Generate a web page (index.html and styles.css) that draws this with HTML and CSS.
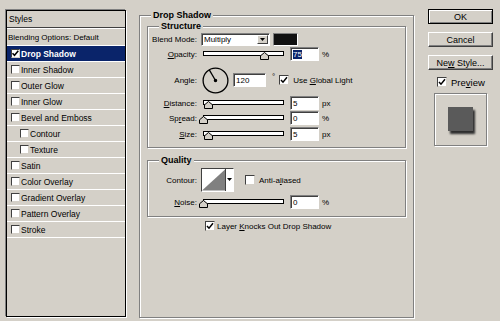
FILE: index.html
```html
<!DOCTYPE html>
<html lang="en">
<head>
  <meta charset="UTF-8" />
  <title>Layer Style</title>
  <link rel="stylesheet" href="styles.css">
</head>
<body>
  <div class="dialog">
    <!-- Styles list -->
    <div class="styles-list">
      <div class="list-head">Styles</div>
      <div class="list-row blend">Blending Options: Default</div>
      <div class="list-row selected"><span class="check on"><svg viewBox="0 0 9 9"><path d="M1.5 4.2 L3.5 6.3 L7.3 1.8" /></svg></span>Drop Shadow</div>
      <div class="list-row"><span class="check"></span>Inner Shadow</div>
      <div class="list-row"><span class="check"></span>Outer Glow</div>
      <div class="list-row"><span class="check"></span>Inner Glow</div>
      <div class="list-row"><span class="check"></span>Bevel and Emboss</div>
      <div class="list-row sub"><span class="check"></span>Contour</div>
      <div class="list-row sub"><span class="check"></span>Texture</div>
      <div class="list-row"><span class="check"></span>Satin</div>
      <div class="list-row"><span class="check"></span>Color Overlay</div>
      <div class="list-row"><span class="check"></span>Gradient Overlay</div>
      <div class="list-row"><span class="check"></span>Pattern Overlay</div>
      <div class="list-row"><span class="check"></span>Stroke</div>
    </div>

    <!-- Drop Shadow settings -->
    <div class="group outer">
      <div class="group-title">Drop Shadow</div>

      <div class="group structure">
        <div class="group-title">Structure</div>

        <div class="row r-blend">
          <span class="lbl">Blend Mode:</span>
          <div class="select">
            <span class="select-text">Multiply</span>
            <span class="select-btn"><svg viewBox="0 0 7 4"><path d="M0 0 H7 L3.5 4 Z" /></svg></span>
          </div>
          <div class="swatch"></div>
        </div>

        <div class="row r-opacity">
          <span class="lbl"><u>O</u>pacity:</span>
          <div class="slider"><div class="track"></div><svg class="thumb" style="left:57px" viewBox="0 0 9 8"><path d="M0.5 7.5 V3.8 L4.5 0.5 L8.5 3.8 V7.5 Z" /></svg></div>
          <div class="field"><span class="sel-text">75</span></div>
          <span class="unit">%</span>
        </div>

        <div class="row r-angle">
          <span class="lbl">Angle:</span>
          <svg class="dial" viewBox="0 0 27 27">
            <circle cx="13.5" cy="13.5" r="12.4" />
            <line x1="13.5" y1="13.5" x2="7.3" y2="2.8" />
            <circle class="dot" cx="13.5" cy="13.5" r="1.1" />
          </svg>
          <div class="field wide">120</div>
          <span class="deg">°</span>
          <span class="box on"><svg viewBox="0 0 10 10"><path d="M2 5 L4 7.2 L8 2.3" /></svg></span>
          <span class="box-lbl">Use <u>G</u>lobal Light</span>
        </div>

        <div class="row r-distance">
          <span class="lbl"><u>D</u>istance:</span>
          <div class="slider"><div class="track"></div><svg class="thumb" style="left:1px" viewBox="0 0 9 8"><path d="M0.5 7.5 V3.8 L4.5 0.5 L8.5 3.8 V7.5 Z" /></svg></div>
          <div class="field">5</div>
          <span class="unit">px</span>
        </div>

        <div class="row r-spread">
          <span class="lbl">Sp<u>r</u>ead:</span>
          <div class="slider"><div class="track"></div><svg class="thumb" style="left:-4px" viewBox="0 0 9 8"><path d="M0.5 7.5 V3.8 L4.5 0.5 L8.5 3.8 V7.5 Z" /></svg></div>
          <div class="field">0</div>
          <span class="unit">%</span>
        </div>

        <div class="row r-size">
          <span class="lbl"><u>S</u>ize:</span>
          <div class="slider"><div class="track"></div><svg class="thumb" style="left:1px" viewBox="0 0 9 8"><path d="M0.5 7.5 V3.8 L4.5 0.5 L8.5 3.8 V7.5 Z" /></svg></div>
          <div class="field">5</div>
          <span class="unit">px</span>
        </div>
      </div>

      <div class="group quality">
        <div class="group-title">Quality</div>

        <div class="row r-contour">
          <span class="lbl">Contour:</span>
          <div class="contour-pick">
            <svg class="curve" viewBox="0 0 24 22"><path d="M0 22 L24 0 V22 Z" /></svg>
            <span class="pick-btn"><svg viewBox="0 0 5 3"><path d="M0 0 H5 L2.5 3 Z" /></svg></span>
          </div>
          <span class="box aa"></span>
          <span class="box-lbl">Anti-a<u>l</u>iased</span>
        </div>

        <div class="row r-noise">
          <span class="lbl"><u>N</u>oise:</span>
          <div class="slider"><div class="track"></div><svg class="thumb" style="left:-4px" viewBox="0 0 9 8"><path d="M0.5 7.5 V3.8 L4.5 0.5 L8.5 3.8 V7.5 Z" /></svg></div>
          <div class="field">0</div>
          <span class="unit">%</span>
        </div>
      </div>

      <div class="row r-knock">
        <span class="box on"><svg viewBox="0 0 10 10"><path d="M2 5 L4 7.2 L8 2.3" /></svg></span>
        <span class="box-lbl">Layer <u>K</u>nocks Out Drop Shadow</span>
      </div>
    </div>

    <!-- Buttons and preview -->
    <div class="side">
      <button class="btn default">OK</button>
      <button class="btn">Cancel</button>
      <button class="btn">Ne<u>w</u> Style...</button>
      <div class="preview-row">
        <span class="box on"><svg viewBox="0 0 10 10"><path d="M2 5 L4 7.2 L8 2.3" /></svg></span>
        <span class="preview-lbl">Pre<u>v</u>iew</span>
      </div>
      <div class="preview-box"><div class="preview-swatch"></div></div>
    </div>
  </div>
</body>
</html>
```

FILE: styles.css
```css
* { box-sizing: border-box; }
body {
  margin: 0;
  background: #d4d0c8;
  font-family: "Liberation Sans", Arial, sans-serif;
  font-size: 8px;
  color: #000;
  overflow: hidden;
}
u { text-decoration: underline; }
.dialog {
  display: flex;
  align-items: flex-start;
  width: 500px;
  height: 321px;
  padding: 9px 0 0 6px;
}

/* styles list */
.styles-list {
  width: 120px;
  height: 307px;
  margin-top: 1px;
  border: 1px solid #000;
  box-shadow: -1px -1px 0 #808080, 1px 1px 0 #fff;
  font-size: 8.5px;
}
.list-head {
  height: 17px;
  line-height: 16px;
  padding-left: 2px;
  border-bottom: 1px solid #404040;
  box-shadow: 0 1px 0 #fff;
}
.list-row {
  display: flex;
  align-items: center;
  height: 16px;
  padding-left: 4px;
  border-bottom: 1px solid #fff;
}
.list-row.blend {
  height: 17px;
  margin-top: 1px;
  padding-left: 1px;
  font-size: 8px;
}
.list-row.sub { padding-left: 13px; }
.list-row.selected {
  background: #0a246a;
  color: #fff;
  font-weight: bold;
}
.check {
  width: 9px;
  height: 9px;
  margin-right: 1px;
  background: #fff;
  border: 1px solid;
  border-color: #404040 #d4d0c8 #d4d0c8 #404040;
}
.check svg, .box svg {
  display: block;
  width: 100%;
  height: 100%;
  fill: none;
  stroke: #000;
  stroke-width: 1.5;
}
.check svg { margin: -1px; width: 9px; height: 9px; }

/* group boxes */
.group {
  display: flex;
  flex-direction: column;
  border: 1px solid #808080;
  box-shadow: inset 1px 1px 0 #fff, 1px 1px 0 #fff;
}
.group-title {
  align-self: flex-start;
  height: 10px;
  line-height: 10px;
  margin: -6px 0 0 11px;
  padding: 0 2px;
  background: #d4d0c8;
  font-size: 9px;
  font-weight: bold;
}
.outer {
  width: 275px;
  height: 303px;
  margin: 6px 0 0 13px;
}
.structure {
  width: 259px;
  margin: 6px 0 0 7px;
  padding-bottom: 6px;
}
.quality {
  width: 259px;
  margin: 12px 0 0 7px;
  padding-bottom: 7px;
}

/* rows */
.row {
  display: flex;
  align-items: center;
  height: 14px;
  flex: none;
}
.lbl {
  width: 49px;
  flex: none;
  text-align: right;
}
.r-blend { margin-top: 1px; }
.r-opacity { margin-top: 1px; }
.r-angle { margin-top: 5px; height: 28px; }
.r-distance { margin-top: 2px; }
.r-spread { margin-top: 1px; }
.r-size { margin-top: 2px; }
.r-contour { margin-top: 3px; height: 24px; }
.r-noise { margin-top: 3px; }
.r-knock { margin-top: 3px; height: 12px; padding-left: 65px; }

.select {
  display: flex;
  width: 69px;
  height: 13px;
  margin-left: 4px;
  background: #fff;
  border: 1px solid;
  border-color: #808080 #fff #fff #808080;
  box-shadow: inset 1px 1px 0 #404040;
}
.select-text {
  flex: 1;
  padding: 1px 0 0 2px;
  line-height: 10px;
}
.select-btn {
  width: 11px;
  margin: 1px 1px 1px 0;
  background: #d4d0c8;
  border: 1px solid;
  border-color: #fff #404040 #404040 #fff;
  display: flex;
  align-items: center;
  justify-content: center;
}
.select-btn svg { width: 5px; height: 3px; fill: #000; }
.swatch {
  width: 25px;
  height: 13px;
  margin-left: 3px;
  background: #111;
  border: 1px solid;
  border-color: #808080 #fff #fff #808080;
}

.slider {
  position: relative;
  width: 81px;
  height: 14px;
  margin-left: 6px;
  flex: none;
}
.track {
  height: 5px;
  margin-top: 4px;
  background: #fff;
  border: 1px solid #000;
}
.thumb {
  position: absolute;
  top: 5px;
  width: 9px;
  height: 8px;
  fill: #d4d0c8;
  stroke: #000;
  stroke-width: 1;
}
.field {
  width: 29px;
  height: 14px;
  margin-left: 6px;
  padding: 1px 0 0 2px;
  line-height: 11px;
  background: #fff;
  border: 1px solid;
  border-color: #808080 #fff #fff #808080;
  box-shadow: inset 1px 1px 0 #404040;
}
.field.wide { width: 33px; margin-left: 4px; }
.sel-text { background: #0a246a; color: #fff; }
.unit { margin-left: 3px; }
.deg { align-self: flex-start; margin: 6px 0 0 6px; }

.dial {
  width: 27px;
  height: 27px;
  margin-left: 5px;
  fill: none;
  stroke: #000;
  stroke-width: 1.3;
}
.dial .dot { fill: #000; }

.box {
  width: 10px;
  height: 10px;
  flex: none;
  background: #fff;
  border: 1px solid;
  border-color: #404040 #d4d0c8 #d4d0c8 #404040;
}
.box svg { margin: -1px; width: 10px; height: 10px; }
.r-angle .box { margin-left: 4px; }
.box-lbl { margin-left: 4px; }
.r-knock .box-lbl { margin-left: 2px; }
.aa { margin-left: 11px; }

.contour-pick {
  display: flex;
  width: 33px;
  height: 24px;
  margin-left: 4px;
  border: 1px solid;
  border-color: #404040 #fff #fff #404040;
  background: #fff;
}
.curve {
  width: 24px;
  height: 22px;
  fill: #808080;
  border-right: 1px solid #404040;
}
.pick-btn {
  flex: 1;
  background: #fff;
  display: flex;
  justify-content: center;
  padding-top: 9px;
}
.pick-btn svg { width: 5px; height: 3px; fill: #000; }

/* right column */
.side {
  display: flex;
  flex-direction: column;
  width: 65px;
  margin-left: 14px;
}
.btn {
  height: 15px;
  margin: 0 0 8px;
  padding: 0;
  font-family: inherit;
  font-size: 9px;
  color: #000;
  background: #d4d0c8;
  border: 1px solid;
  border-color: #fff #404040 #404040 #fff;
  box-shadow: inset -1px -1px 0 #808080;
}
.btn.default {
  border-color: #000;
  box-shadow: inset 1px 1px 0 #fff, inset -1px -1px 0 #808080;
}
.preview-row {
  display: flex;
  align-items: center;
  height: 10px;
  margin-top: -1px;
  padding-left: 9px;
}
.preview-lbl { margin-left: 4px; font-size: 9.5px; }
.preview-box {
  display: flex;
  align-items: center;
  justify-content: center;
  width: 53px;
  height: 53px;
  margin: 6px 0 0 6px;
  border: 1px solid #808080;
  box-shadow: inset 1px 1px 0 #fff, 1px 1px 0 #fff;
}
.preview-swatch {
  width: 25px;
  height: 24px;
  margin: -2px 0 0 -1px;
  background: #5a5a5a;
  box-shadow: 2px 3px 2px #2e2e2e;
}
```
